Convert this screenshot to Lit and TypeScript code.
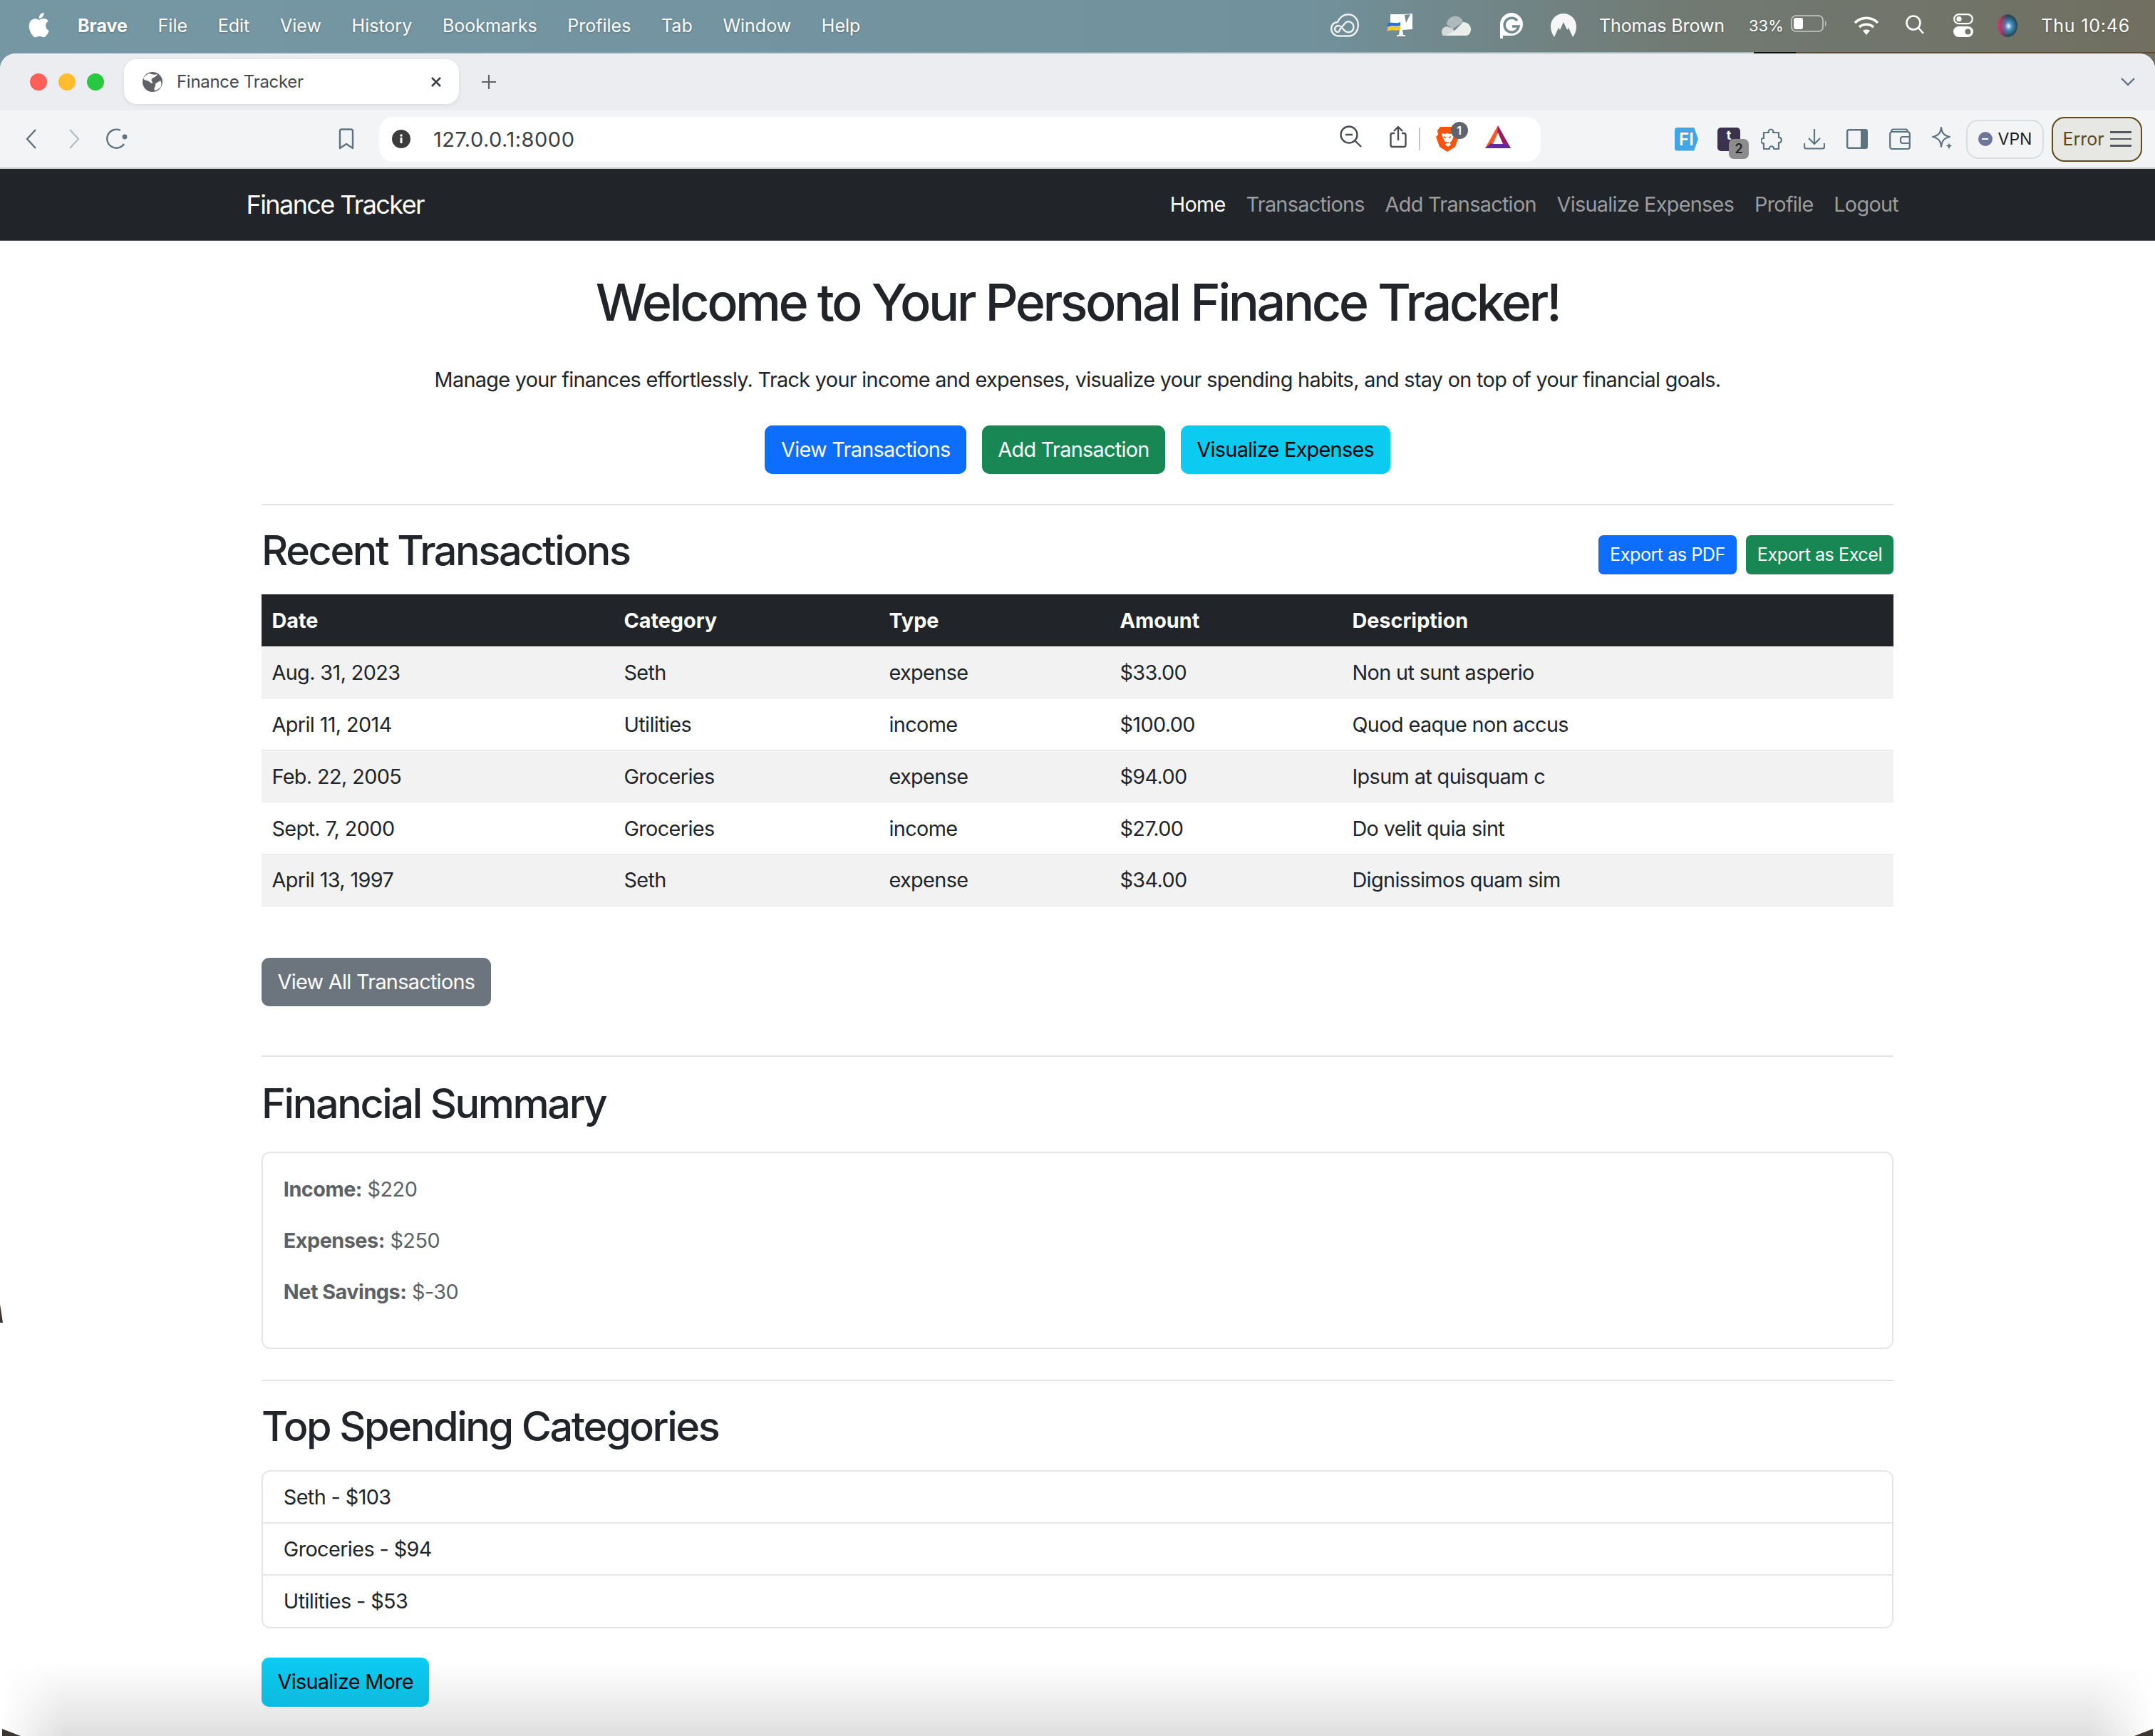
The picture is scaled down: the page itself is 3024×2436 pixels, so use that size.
import { LitElement, css, html, svg } from 'lit';
import { customElement } from 'lit/decorators.js';

const menuItems = ['File', 'Edit', 'View', 'History', 'Bookmarks', 'Profiles', 'Tab', 'Window', 'Help'];
const navItems = ['Transactions', 'Add Transaction', 'Visualize Expenses', 'Profile', 'Logout'];
const rows = [
  ['Aug. 31, 2023', 'Seth', 'expense', '$33.00', 'Non ut sunt asperio'],
  ['April 11, 2014', 'Utilities', 'income', '$100.00', 'Quod eaque non accus'],
  ['Feb. 22, 2005', 'Groceries', 'expense', '$94.00', 'Ipsum at quisquam c'],
  ['Sept. 7, 2000', 'Groceries', 'income', '$27.00', 'Do velit quia sint'],
  ['April 13, 1997', 'Seth', 'expense', '$34.00', 'Dignissimos quam sim'],
];
const summary = [['Income:', '$220'], ['Expenses:', '$250'], ['Net Savings:', '$-30']];
const categories = ['Seth - $103', 'Groceries - $94', 'Utilities - $53'];

// menu bar glyphs
const apple = svg`<svg width="34" height="38" viewBox="2 1 19 22" fill="#fff"><path d="M18.71 19.5c-.83 1.24-1.71 2.45-3.05 2.47-1.34.03-1.77-.79-3.29-.79-1.53 0-2 .77-3.27.82-1.31.05-2.3-1.32-3.14-2.53C4.25 17 2.94 12.45 4.7 9.39c.87-1.52 2.43-2.48 4.12-2.51 1.28-.02 2.5.87 3.29.87.78 0 2.26-1.07 3.81-.91.65.03 2.47.26 3.64 1.98-.09.06-2.17 1.28-2.15 3.81.03 3.02 2.65 4.03 2.68 4.04-.03.07-.42 1.44-1.38 2.83M13 3.5c.73-.83 1.94-1.46 2.94-1.5.13 1.17-.34 2.35-1.04 3.19-.69.85-1.83 1.51-2.95 1.42-.15-1.15.41-2.35 1.05-3.11z"/></svg>`;
const creative = svg`<svg width="40" height="33" viewBox="0 0 40 33" fill="none" stroke="#eef1f1" stroke-width="2.4" stroke-linejoin="round" stroke-linecap="round"><path d="M12 31.500C5 31.500 1.200 26.500 1.200 21.500 1.200 15.500 5 12.500 10 12C12 6 18 1.200 25 1.200 33 1.200 38.800 8 38.800 16 38.800 25 33 31.500 26 31.500z"/><path d="M11 26C6.500 26 5 21.500 7 19 10 15.500 14 17 17 21 20 25 23 27 27 26 32 25 34 19.500 31.500 15 29 11 24 10 21 13L14 21C12.500 24 12 26 11 26z"/></svg>`;
const keynote = svg`<svg width="38" height="36" viewBox="0 0 38 36"><path d="M5 2h19l12-1v22l-14 1H5z" fill="#fff"/><path d="M25 3l8-1-6 12z" fill="#70898f"/><path d="M18 24h4l1 7h3v2H14v-2h3z" fill="#fff"/><path d="M1 15c6-3 12 1 18-2v5c-6 2-12-1-18 2z" fill="#2e6fc4"/><path d="M1 20c6-3 12 1 18-2v6c-6 2-12-1-18 2z" fill="#f2c82e"/></svg>`;
const oneDrive = svg`<svg width="42" height="32" viewBox="0 0 42 32"><path d="M8 14C9 6 16 1 23 3c4 1 7 4 8 8L16 21z" fill="#aeb9bb"/><path d="M3 30c-4-4-2-12 5-13l8 3 8 10z" fill="#d4d9da"/><path d="M31 11c6 0 11 4 11 10 0 5-3 9-7 9H6c12-4 18-12 25-19z" fill="#eceeee"/></svg>`;
const grammarly = svg`<svg width="34" height="38" viewBox="0 0 34 38"><path d="M17 1a16 16 0 0 1 0 32H1V17A16 16 0 0 1 17 1z M1 33h4v4H1z" fill="#fff"/><path d="M25 12a10 10 0 1 0 2 8h-9" fill="none" stroke="#70898f" stroke-width="3.6"/></svg>`;
const nord = svg`<svg width="38" height="36" viewBox="0 0 38 36"><path d="M19 1c10 0 18 8 18 18 0 6-2 11-5 15l-6-13-2 3-5-11-5 11-2-3-6 13C3 30 1 25 1 19 1 9 9 1 19 1z" fill="#f5f6f5"/></svg>`;
const battery = svg`<svg width="52" height="28" viewBox="0 0 52 28"><rect x="1" y="3" width="44" height="22" rx="6" fill="none" stroke="#c8cdc9" stroke-width="1.6"/><rect x="4" y="6" width="13" height="16" rx="3" fill="#fff"/><path d="M48 10c2 1 2 7 0 8z" fill="#c8cdc9"/></svg>`;
const wifi = svg`<svg width="36" height="30" viewBox="0 0 36 30" fill="none" stroke="#fff" stroke-width="3.6"><path d="M2 11c9-9 23-9 32 0M8 17c6-5 14-5 20 0"/><path d="M13 22c3-2 7-2 10 0l-5 6z" fill="#fff" stroke="none"/></svg>`;
const searchMenu = svg`<svg width="28" height="32" viewBox="0 0 28 32" fill="none" stroke="#fff" stroke-width="2.6"><circle cx="12" cy="12" r="9.5"/><path d="M19 19l7 8"/></svg>`;
const control = svg`<svg width="28" height="34" viewBox="0 0 28 34"><rect x="1.2" y="1.2" width="25.6" height="13" rx="6.5" fill="none" stroke="#fff" stroke-width="2.2"/><circle cx="8" cy="7.7" r="3.6" fill="#fff"/><rect y="18" width="28" height="15" rx="7.5" fill="#fff"/><circle cx="20.5" cy="25.5" r="4" fill="#70776f"/></svg>`;
const siri = svg`<svg width="30" height="34" viewBox="0 0 30 34"><defs><radialGradient id="sg" cx=".55" cy=".52" r=".6"><stop offset="0" stop-color="#f2f6ff"/><stop offset=".3" stop-color="#3f8ec4"/><stop offset=".75" stop-color="#24444f"/><stop offset="1" stop-color="#2f6e60"/></radialGradient><linearGradient id="sp" x1="0" x2="1"><stop offset="0" stop-color="#e8306f"/><stop offset=".5" stop-color="#e8306f" stop-opacity="0"/></linearGradient></defs><ellipse cx="15" cy="17" rx="14" ry="16" fill="url(#sg)"/><ellipse cx="15" cy="17" rx="14" ry="16" fill="url(#sp)"/></svg>`;

// browser chrome glyphs
const globe = svg`<svg width="28" height="28" viewBox="0 0 28 28"><circle cx="14" cy="14" r="14" fill="#5f6368"/><path d="M10 2c4 2 8 2 11 1-1 4-6 4-8 7-2 2 2 4 1 6-3 0-5-4-8-4-2 0-4-1-5-3 2-3 5-6 9-7zM25 12c2 3 2 7 0 10-2 1-5 4-8 4-2-3 2-6 1-9 2-3 5-3 7-5z" fill="#fff"/></svg>`;
const closeX = svg`<svg width="16" height="16" viewBox="0 0 16 16" stroke="#3c4043" stroke-width="2.6"><path d="M2 2l12 12M14 2L2 14"/></svg>`;
const plus = svg`<svg width="22" height="22" viewBox="0 0 22 22" stroke="#5f6368" stroke-width="2.2"><path d="M11 1v20M1 11h20"/></svg>`;
const chevDown = svg`<svg width="20" height="12" viewBox="0 0 20 12" fill="none" stroke="#5e7380" stroke-width="2.4"><path d="M1 1l9 9 9-9"/></svg>`;
const back = svg`<svg width="16" height="28" viewBox="0 0 16 28" fill="none" stroke="#5e7380" stroke-width="2.4"><path d="M14 1L2 14l12 13"/></svg>`;
const forward = svg`<svg width="16" height="28" viewBox="0 0 16 28" fill="none" stroke="#b4c0c6" stroke-width="2.4"><path d="M2 1l12 13L2 27"/></svg>`;
const reload = svg`<svg width="30" height="30" viewBox="0 0 30 30" fill="none" stroke="#5e7380" stroke-width="2.4"><path d="M25 22A13 13 0 1 1 20 3"/><circle cx="26" cy="12" r="3.4" fill="#5e7380" stroke="none"/></svg>`;
const bookmark = svg`<svg width="22" height="30" viewBox="0 0 22 30" fill="none" stroke="#5e7380" stroke-width="2.4" stroke-linejoin="round"><path d="M2 4c0-1.500 1-2.500 2.500-2.500h13C19 1.500 20 2.500 20 4v24l-9-6-9 6z"/></svg>`;
const info = svg`<svg width="26" height="26" viewBox="0 0 26 26"><circle cx="13" cy="13" r="13" fill="#3c3c3c"/><rect x="11.500" y="11" width="3" height="8" fill="#fff"/><rect x="11.500" y="6.500" width="3" height="3" fill="#fff"/></svg>`;
const zoomOut = svg`<svg width="32" height="32" viewBox="0 0 32 32" fill="none" stroke="#4a4d52" stroke-width="2.4"><circle cx="13" cy="13" r="11.500"/><path d="M21 21l9 9M8 13h10"/></svg>`;
const share = svg`<svg width="24" height="32" viewBox="0 0 24 32" fill="none" stroke="#4a4d52" stroke-width="2.4" stroke-linejoin="round"><path d="M7 11H4c-1.500 0-2.500 1-2.500 2.500v14C1.500 29 2.500 30 4 30h16c1.500 0 2.500-1 2.500-2.500v-14C22.500 12 21.500 11 20 11h-3M12 21V2M6 8l6-6 6 6"/></svg>`;
const lion = svg`<svg width="32" height="36" viewBox="0 0 32 36"><path d="M6 1h20l4 5-1 6 3 3-5 14-11 7-11-7L0 15l3-3-1-6z" fill="#f9540f"/><path d="M8 10l5 1 3-1 3 1 5-1 1 4-3 7-3 2 2 3-4 3-4-3 2-3-3-2-3-7z" fill="#fff"/><path d="M11 15l3 1M21 15l-3 1M14 23h4" stroke="#f9540f" stroke-width="1.600"/></svg>`;
const bat = svg`<svg width="36" height="32" viewBox="0 0 36 32"><path d="M18 0L0 32h12l6-11z" fill="#fb5a2c"/><path d="M18 0l18 32H25l-7-11-1-10z" fill="#9b1c5e"/><path d="M0 32h36l-4-6H10l-2-1z" fill="#66299b"/><path d="M18 10l7 16H11z" fill="#fff"/></svg>`;
const puzzle = svg`<svg width="30" height="32" viewBox="0 0 30 32" fill="none" stroke="#5e7380" stroke-width="2.2" stroke-linejoin="round"><path d="M11 7c-2-6 8-6 6 0h8v7c5-1 5 8 0 7v9h-7c1-5-7-5-6 0H4v-8c-5 1-5-8 0-7V7z"/></svg>`;
const download = svg`<svg width="30" height="30" viewBox="0 0 30 30" fill="none" stroke="#5e7380" stroke-width="2.2"><path d="M15 1v20M7 14l8 8 8-8M1 21v5c0 1.500 1 2.500 2.500 2.500h23c1.500 0 2.500-1 2.500-2.500v-5"/></svg>`;
const sidebar = svg`<svg width="30" height="28" viewBox="0 0 30 28"><rect x="1.200" y="1.200" width="27.600" height="25.600" rx="2" fill="none" stroke="#5e7380" stroke-width="2.400"/><rect x="20" y="1" width="9" height="26" fill="#5e7380"/></svg>`;
const wallet = svg`<svg width="30" height="30" viewBox="0 0 30 30" fill="none" stroke="#5e7380" stroke-width="2.2"><rect x="1.200" y="5" width="27.600" height="24" rx="3"/><path d="M3 5c0-2 1-3.500 3-3.500h17c2 0 3 1.500 3 3.500M29 12H19c-2 0-3 1-3 3v3c0 2 1 3 3 3h10"/></svg>`;
const sparkle = svg`<svg width="32" height="36" viewBox="0 0 32 36" fill="none" stroke="#5e7380" stroke-width="2.2"><path d="M14 2c1 8 4 11 12 13-8 2-11 5-12 14-1-9-4-12-12-14 8-2 11-5 12-13z" stroke-linejoin="round"/><path d="M25 23c.5 3 1.500 4 5 4.500-3.500.5-4.500 2-5 6-.5-4-1.500-5.500-5-6 3.500-.5 4.500-1.500 5-4.500z" fill="#5e7380" stroke="none"/></svg>`;

@customElement('app-root')
export class AppRoot extends LitElement {
  static styles = css`
    :host {
      display: block;
      position: relative;
      height: 2436px;
      overflow: hidden;
      font-family: Inter, 'Liberation Sans', sans-serif;
      background: linear-gradient(to right, #7597a4 0%, #71929d 60%, #717a73 78%, #706f60 100%);
      color: #212529;
    }
    a { text-decoration: none; color: inherit; }

    /* macOS menu bar */
    .menubar {
      height: 73px;
      box-sizing: border-box;
      padding-bottom: 2px;
      display: flex;
      align-items: center;
      color: #fff;
      font-size: 25px;
      text-shadow: 0 1px 3px rgba(0, 0, 0, 0.25);
    }
    .apple { width: 34px; height: 38px; margin-left: 37px; margin-right: 38px; margin-top: -2px; }
    .menu-items { display: flex; gap: 42.700px; }
    .menu-items b { font-weight: 700; }
    .menu-right { margin-left: auto; display: flex; align-items: center; }
    .status { width: 78px; display: flex; justify-content: center; }
    .status-last { width: 68px; }
    .user { margin-left: 16px; margin-right: 34px; letter-spacing: -0.1px; }
    .pct { font-size: 22px; margin-right: 10px; }
    .status-sm { width: 68px; display: flex; justify-content: center; }
    .status-siri { width: 57px; }
    .batt-gap { margin-right: 20px; }
    .clock { margin-left: 18.500px; margin-right: 35px; letter-spacing: 0.8px; }
    .edge {
      height: 2px;
      background: linear-gradient(to right, #7597a4 0, #a8bcc0 2400px, #a8bcc0 2461px, #111 2461px, #111 2520px, #5c4a30 2520px, #5c4a30 100%);
    }

    /* browser window */
    .window { background: #fff; border-radius: 22px 22px 0 0; overflow: hidden; height: 2361px; }
    .tabstrip {
      height: 80px;
      box-sizing: border-box;
      padding-bottom: 1px;
      background: #ecedf1;
      display: flex;
      align-items: center;
    }
    .lights { display: flex; gap: 16px; margin-left: 42px; margin-right: 28px; }
    .lights i { width: 24px; height: 24px; border-radius: 50%; display: block; }
    .red { background: #ff5f57; }
    .amber { background: #febc2e; }
    .green { background: #28c840; }
    .tab {
      width: 470px;
      height: 63px;
      background: #fff;
      border-radius: 18px;
      display: flex;
      align-items: center;
      padding: 0 24px 0 26px;
      box-sizing: border-box;
      font-size: 24px;
      letter-spacing: -0.3px;
      color: #45484d;
      box-shadow: 0 2px 6px rgba(0, 0, 0, 0.08);
      gap: 20px;
    }
    .tab span { flex: 1; }
    .plus { margin-left: 31px; display: flex; }
    .chev { margin-left: auto; margin-right: 28px; display: flex; }
    .toolbar {
      height: 82px;
      box-sizing: border-box;
      background: #f3f4f6;
      border-bottom: 2px solid #c9cacc;
      display: flex;
      align-items: center;
      padding-left: 14px;
    }
    .tool { width: 60px; display: flex; justify-content: center; align-items: center; }
    .book { margin-left: 262px; margin-right: 16px; }
    .url {
      width: 1630px;
      height: 63px;
      background: #fff;
      border-radius: 20px;
      display: flex;
      align-items: center;
      box-sizing: border-box;
      padding-left: 18px;
      font-size: 29px;
      letter-spacing: 0.5px;
      color: #3c4043;
    }
    .url-text { margin-left: 32px; }
    .url-tools { margin-left: auto; display: flex; align-items: center; }
    .u-zoom { margin-right: 38px; }
    .u-share { margin-right: 17px; }
    .u-div { width: 2px; height: 32px; background: #c6c6c6; margin-right: 22px; }
    .brave { position: relative; width: 32px; height: 36px; margin-right: 37px; }
    .count {
      position: absolute;
      border-radius: 50%;
      display: flex;
      align-items: center;
      justify-content: center;
      font-weight: 600;
    }
    .count-brave { left: 21px; top: -6px; width: 24px; height: 24px; background: #5f6370; color: #fff; font-size: 16px; }
    .u-bat { margin-right: 42px; }
    .exts { display: flex; align-items: center; margin-left: 188px; }
    .fi {
      width: 33px;
      height: 33px;
      background: #41a5e6;
      border-radius: 4px;
      clip-path: polygon(0 0, 82% 0, 100% 50%, 82% 100%, 0 100%);
      color: #fff;
      font-size: 24px;
      font-weight: 600;
      display: flex;
      align-items: center;
      justify-content: center;
      margin-right: 27px;
    }
    .dark {
      position: relative;
      width: 32px;
      height: 33px;
      background: #3b3250;
      border-radius: 5px;
      color: #fff;
      font-size: 18px;
      font-weight: 700;
      text-align: center;
      margin-right: 14px;
    }
    .count-dark {
      left: 16px;
      top: 16px;
      width: 28px;
      height: 28px;
      border-radius: 7px;
      background: #8c8c8c;
      color: #222;
      font-size: 18px;
    }
    .ext { width: 60px; display: flex; justify-content: center; }
    .vpn {
      width: 109px;
      height: 55px;
      box-sizing: border-box;
      margin-left: 3px;
      border: 2px solid #d7dfe4;
      border-radius: 17px;
      display: flex;
      align-items: center;
      justify-content: center;
      gap: 8px;
      font-size: 23px;
      color: #1c1c1e;
    }
    .vpn i {
      width: 20px;
      height: 20px;
      border-radius: 50%;
      background: #6f7597;
      display: flex;
      align-items: center;
      justify-content: center;
    }
    .vpn i::after { content: ''; width: 9px; height: 2px; background: #fff; }
    .error {
      width: 127px;
      height: 63px;
      box-sizing: border-box;
      margin-left: 11px;
      background: #e7e7e4;
      border: 2px solid #5d4c1a;
      border-radius: 18px;
      display: flex;
      align-items: center;
      justify-content: center;
      gap: 8px;
      color: #5a4a18;
      font-size: 25px;
    }
    .burger { display: flex; flex-direction: column; gap: 7px; width: 30px; }
    .burger i { height: 2.5px; background: #55585c; display: block; }

    /* page */
    .navbar {
      height: 101px;
      background: #212529;
      box-sizing: border-box;
      padding: 0 345.600px;
      display: flex;
      align-items: center;
      justify-content: space-between;
      border-bottom: 1px solid #5a5d60;
    }
    .brand { color: #fff; font-size: 36px; letter-spacing: -1.600px; }
    .nav { display: flex; }
    .nav a { padding: 0 14.400px; font-size: 28.800px; color: #9b9d9f; letter-spacing: -0.700px; line-height: 43.200px; }
    .nav a.active { color: #fff; }
    main { padding: 0 367px; font-size: 28.800px; line-height: 43.200px; }
    h1, h2 { font-weight: 500; margin: 0; line-height: 1.2; }
    h1 { font-size: 72px; letter-spacing: -3.550px; text-align: center; margin-top: 43px; margin-bottom: 43.200px; }
    h2 { font-size: 57.600px; letter-spacing: -2.400px; }
    .lead { margin: 0 0 43.200px; text-align: center; letter-spacing: -0.680px; }
    .btns { display: flex; justify-content: center; gap: 21.600px; }
    .btn {
      display: inline-block;
      box-sizing: border-box;
      height: 68.400px;
      padding: 0 22.600px;
      border-radius: 10.800px;
      line-height: 68.400px;
      font-size: 28.800px;
      letter-spacing: -0.700px;
      color: #fff;
    }
    .btn-sm { height: 55px; line-height: 55px; padding: 0 16px; border-radius: 7px; font-size: 25.200px; letter-spacing: -0.500px; }
    .primary { background: #0d6efd; }
    .success { background: #198754; }
    .info { background: #0dcaf0; color: #000; }
    .secondary { background: #6c757d; }
    hr { border: 0; height: 2px; background: #e3e3e3; margin: 0; }
    .hr-1 { margin-top: 42px; margin-bottom: 28.800px; }
    .head { display: flex; align-items: center; justify-content: space-between; height: 69px; margin-bottom: 27px; }
    .export { display: flex; gap: 13px; margin-top: 12px; }
    table { width: 100%; border-collapse: collapse; table-layout: fixed; letter-spacing: -0.600px; }
    th, td { height: 72.900px; padding: 0 14.400px; text-align: left; box-sizing: border-box; border-bottom: 1.500px solid #e5e7ea; }
    th { background: #212529; color: #fff; font-weight: 700; border-bottom: 0; letter-spacing: 0; }
    tbody tr:nth-child(odd) td { background: #f2f2f2; }
    .c-date { width: 494px; }
    .c-cat { width: 372px; }
    .c-type { width: 324px; }
    .c-amt { width: 326px; }
    .view-all { margin-top: 72px; margin-bottom: 69px; }
    .hr-2 { margin-bottom: 31px; }
    .head-2 { margin-bottom: 33px; }
    .card {
      border: 2px solid #e6e7e9;
      border-radius: 12px;
      padding: 28.800px;
      height: 277px;
      box-sizing: border-box;
      color: #5d6165;
      letter-spacing: -0.500px;
    }
    .card p { margin: 0 0 28.800px; }
    .card b { font-weight: 700; }
    .hr-3 { margin-top: 43px; margin-bottom: 29px; }
    .head-3 { margin-bottom: 27px; }
    .list { border: 2px solid #e6e7e9; border-radius: 12px; letter-spacing: -0.600px; }
    .list div { height: 72.600px; line-height: 71px; padding: 0 28.800px; box-sizing: border-box; border-bottom: 2px solid #e6e7e9; }
    .list div:last-child { border-bottom: 0; }
    .more { margin-top: 41px; }

    /* window shadow and desktop slivers over the page */
    .fade {
      position: absolute;
      left: 0;
      right: 0;
      bottom: 0;
      height: 104px;
      background: linear-gradient(to bottom, rgba(0, 0, 0, 0), rgba(0, 0, 0, 0.125));
      mask-image: linear-gradient(to right, transparent 0, #000 90px, #000 2934px, transparent 100%);
      -webkit-mask-image: linear-gradient(to right, transparent 0, #000 90px, #000 2934px, transparent 100%);
    }
    .corner { position: absolute; bottom: 0; width: 26px; height: 10px; background: #3d3630; }
    .corner-l { left: 3px; clip-path: polygon(0 0, 100% 100%, 0 100%); }
    .corner-r { right: 3px; clip-path: polygon(100% 0, 100% 100%, 0 100%); }
    .sliver { position: absolute; left: 0; top: 1830px; width: 4px; height: 26px; background: #3d3630; clip-path: polygon(0 0, 100% 100%, 0 100%); }
  `;

  render() {
    return html`
      <div class="menubar">
        <span class="apple">${apple}</span>
        <div class="menu-items"><b>Brave</b>${menuItems.map((m) => html`<span>${m}</span>`)}</div>
        <div class="menu-right">
          <span class="status">${creative}</span>
          <span class="status">${keynote}</span>
          <span class="status">${oneDrive}</span>
          <span class="status">${grammarly}</span>
          <span class="status status-last">${nord}</span>
          <span class="user">Thomas Brown</span>
          <span class="pct">33%</span>
          <span class="batt-gap">${battery}</span>
          <span class="status-sm">${wifi}</span>
          <span class="status-sm">${searchMenu}</span>
          <span class="status-sm">${control}</span>
          <span class="status-sm status-siri">${siri}</span>
          <span class="clock">Thu 10:46</span>
        </div>
      </div>
      <div class="edge"></div>
      <div class="window">
        <div class="tabstrip">
          <div class="lights"><i class="red"></i><i class="amber"></i><i class="green"></i></div>
          <div class="tab">${globe}<span>Finance Tracker</span>${closeX}</div>
          <span class="plus">${plus}</span>
          <span class="chev">${chevDown}</span>
        </div>
        <div class="toolbar">
          <span class="tool">${back}</span>
          <span class="tool">${forward}</span>
          <span class="tool">${reload}</span>
          <span class="tool book">${bookmark}</span>
          <div class="url">
            ${info}
            <span class="url-text">127.0.0.1:8000</span>
            <div class="url-tools">
              <span class="u-zoom">${zoomOut}</span>
              <span class="u-share">${share}</span>
              <span class="u-div"></span>
              <span class="brave">${lion}<span class="count count-brave">1</span></span>
              <span class="u-bat">${bat}</span>
            </div>
          </div>
          <div class="exts">
            <span class="fi">FI</span>
            <span class="dark">t<span class="count count-dark">2</span></span>
            <span class="ext">${puzzle}</span>
            <span class="ext">${download}</span>
            <span class="ext">${sidebar}</span>
            <span class="ext">${wallet}</span>
            <span class="ext">${sparkle}</span>
            <span class="vpn"><i></i>VPN</span>
            <span class="error">Error<span class="burger"><i></i><i></i><i></i></span></span>
          </div>
        </div>
        <nav class="navbar">
          <a class="brand">Finance Tracker</a>
          <div class="nav">
            <a class="active">Home</a>
            ${navItems.map((n) => html`<a>${n}</a>`)}
          </div>
        </nav>
        <main>
          <h1>Welcome to Your Personal Finance Tracker!</h1>
          <p class="lead">Manage your finances effortlessly. Track your income and expenses, visualize your spending habits, and stay on top of your financial goals.</p>
          <div class="btns">
            <a class="btn primary">View Transactions</a>
            <a class="btn success">Add Transaction</a>
            <a class="btn info">Visualize Expenses</a>
          </div>
          <hr class="hr-1" />
          <div class="head">
            <h2>Recent Transactions</h2>
            <div class="export">
              <a class="btn btn-sm primary">Export as PDF</a>
              <a class="btn btn-sm success">Export as Excel</a>
            </div>
          </div>
          <table>
            <colgroup><col class="c-date" /><col class="c-cat" /><col class="c-type" /><col class="c-amt" /><col /></colgroup>
            <thead><tr><th>Date</th><th>Category</th><th>Type</th><th>Amount</th><th>Description</th></tr></thead>
            <tbody>${rows.map((r) => html`<tr>${r.map((c) => html`<td>${c}</td>`)}</tr>`)}</tbody>
          </table>
          <div class="view-all"><a class="btn secondary">View All Transactions</a></div>
          <hr class="hr-2" />
          <div class="head head-2"><h2>Financial Summary</h2></div>
          <div class="card">${summary.map(([k, v]) => html`<p><b>${k}</b> ${v}</p>`)}</div>
          <hr class="hr-3" />
          <div class="head head-3"><h2>Top Spending Categories</h2></div>
          <div class="list">${categories.map((c) => html`<div>${c}</div>`)}</div>
          <div class="more"><a class="btn info">Visualize More</a></div>
        </main>
      </div>
      <div class="fade"></div>
      <div class="corner corner-l"></div>
      <div class="corner corner-r"></div>
      <div class="sliver"></div>
    `;
  }
}
